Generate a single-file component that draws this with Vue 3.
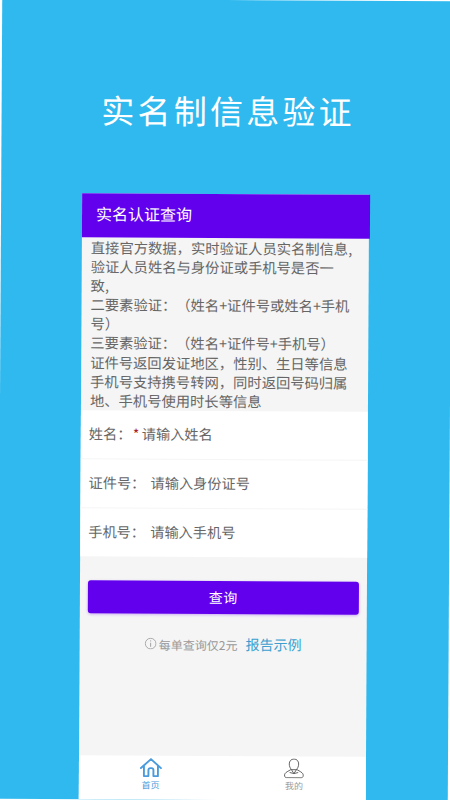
<script setup>
const intro = [
  '直接官方数据，实时验证人员实名制信息,',
  '验证人员姓名与身份证或手机号是否一',
  '致,',
  '二要素验证：（姓名+证件号或姓名+手机',
  '号）',
  '三要素验证：（姓名+证件号+手机号）',
  '证件号返回发证地区，性别、生日等信息',
  '手机号支持携号转网，同时返回号码归属',
  '地、手机号使用时长等信息'
]
const fields = [
  { label: '姓名：', hint: '请输入姓名', required: true },
  { label: '证件号：', hint: '请输入身份证号' },
  { label: '手机号：', hint: '请输入手机号' }
]
</script>

<template>
  <div class="page">
    <h1 class="title">实名制信息验证</h1>
    <main class="card">
      <header class="head">实名认证查询</header>
      <section class="intro">
        <p v-for="line in intro" :key="line">{{ line }}</p>
      </section>
      <section class="form">
        <div v-for="f in fields" :key="f.label" class="row">
          <span class="label">{{ f.label }}</span>
          <span v-if="f.required" class="star">*</span>
          <span class="hint">{{ f.hint }}</span>
        </div>
      </section>
      <section class="actions">
        <button class="submit">查询</button>
        <div class="price">
          <svg class="info" viewBox="0 0 12 12" width="12" height="12">
            <circle cx="6" cy="6" r="5.300" fill="none" stroke="#999" stroke-width="0.800" />
            <path d="M6 5.200V9.200M6 2.800v1.100" fill="none" stroke="#999" stroke-width="0.900" />
          </svg>
          <span class="cost">每单查询仅2元</span>
          <a class="sample">报告示例</a>
        </div>
      </section>
      <nav class="tabs">
        <div class="tab active">
          <svg viewBox="0 0 24 20" width="24" height="20">
            <path d="M2 10.500 12 1.500l10 9M5 8.500V18.500H9.500V12.500a2 2 0 0 1 2-2h1a2 2 0 0 1 2 2v6H19V8.500" fill="none" stroke="#4a9bdc" stroke-width="1.900" stroke-linejoin="round" stroke-linecap="round" />
          </svg>
          <span>首页</span>
        </div>
        <div class="tab">
          <svg viewBox="0 0 20 20" width="20" height="20">
            <path d="M10 .6c3 0 4.700 2.300 4.700 5 0 2.300-1 4.300-2.200 5.700H7.500C6.300 9.900 5.300 7.900 5.300 5.600c0-2.700 1.700-5 4.700-5Z" fill="none" stroke="#555" stroke-width="0.900" />
            <path d="M7.300 11 3.200 13.400C1.200 14.600.3 16 .7 17.700c.3 1 1 1.700 2.200 1.700h14.200c1.200 0 1.900-.7 2.200-1.700.4-1.700-.5-3.100-2.500-4.300L12.700 11 10 15.200 7.300 11ZM10 15.200l-4.300-1.100M10 15.200l4.300-1.100" fill="none" stroke="#555" stroke-width="0.900" stroke-linejoin="round" />
          </svg>
          <span>我的</span>
        </div>
      </nav>
    </main>
  </div>
</template>

<style>
html,
body {
  background: #fff;
  overflow: hidden;
}
</style>

<style scoped>
.page {
  height: 800px;
  overflow: hidden;
  background: #2fb9ee;
  font-family: "Noto Sans CJK SC", "Noto Sans", sans-serif;
  text-spacing-trim: space-all;
  transform: rotate(0.32deg);
  transform-origin: 50% 50%;
}
.title {
  height: 194px;
  margin: 0;
  padding: 87px 0 0 3px;
  box-sizing: border-box;
  text-align: center;
  color: #fff;
  font-size: 33px;
  line-height: 46px;
  font-weight: 400;
  letter-spacing: 3.200px;
}
.card {
  width: 287px;
  height: 606px;
  margin-left: 81px;
  display: flex;
  flex-direction: column;
  background: #f5f5f5;
}
.head {
  flex: none;
  width: 288px;
  height: 44px;
  padding-left: 14px;
  box-sizing: border-box;
  background: #6200ee;
  color: #fff;
  font-size: 16px;
  line-height: 41px;
}
.intro {
  height: 173px;
  padding: 0 0 0 9px;
  box-sizing: border-box;
  color: #666;
  font-size: 14.300px;
  line-height: 19.100px;
  white-space: nowrap;
}
.intro p {
  margin: 0;
}
.form {
  background: #fff;
}
.row {
  height: 49px;
  display: flex;
  align-items: center;
  padding: 0 0 2px 8px;
  box-sizing: border-box;
  border-bottom: 1px solid #f5f5f5;
  font-size: 14.200px;
  color: #666;
}
.row:last-child {
  height: 48px;
  border-bottom: 0;
}
.label {
  width: 62px;
}
.row:first-child .label {
  width: 44px;
}
.star {
  width: 9px;
  color: #a5182b;
  font-size: 14px;
}
.actions {
  flex: 1;
  padding: 24px 8px 0;
}
.submit {
  display: block;
  width: 100%;
  height: 33px;
  padding: 0 0 2px;
  border: 0;
  border-radius: 3px;
  background: #6200ee;
  color: #fff;
  font: inherit;
  font-size: 14px;
  letter-spacing: 0.500px;
  box-shadow: 0 1px 3px rgba(98, 0, 238, .3);
}
.price {
  display: flex;
  align-items: center;
  justify-content: center;
  margin-top: 19px;
  height: 22px;
}
.info {
  margin-right: 2px;
}
.cost {
  color: #999;
  font-size: 12px;
}
.sample {
  margin-left: 8px;
  color: #3a9fd0;
  font-size: 14px;
}
.tabs {
  flex: none;
  height: 44px;
  display: flex;
  background: #fff;
}
.tab {
  flex: 1;
  display: flex;
  flex-direction: column;
  align-items: center;
  color: #999;
  font-size: 9px;
  line-height: 12px;
  padding-top: 2px;
  box-sizing: border-box;
}
.tab svg {
  display: block;
  margin-bottom: 2px;
}
.tab.active {
  color: #4a9bdc;
}
</style>
